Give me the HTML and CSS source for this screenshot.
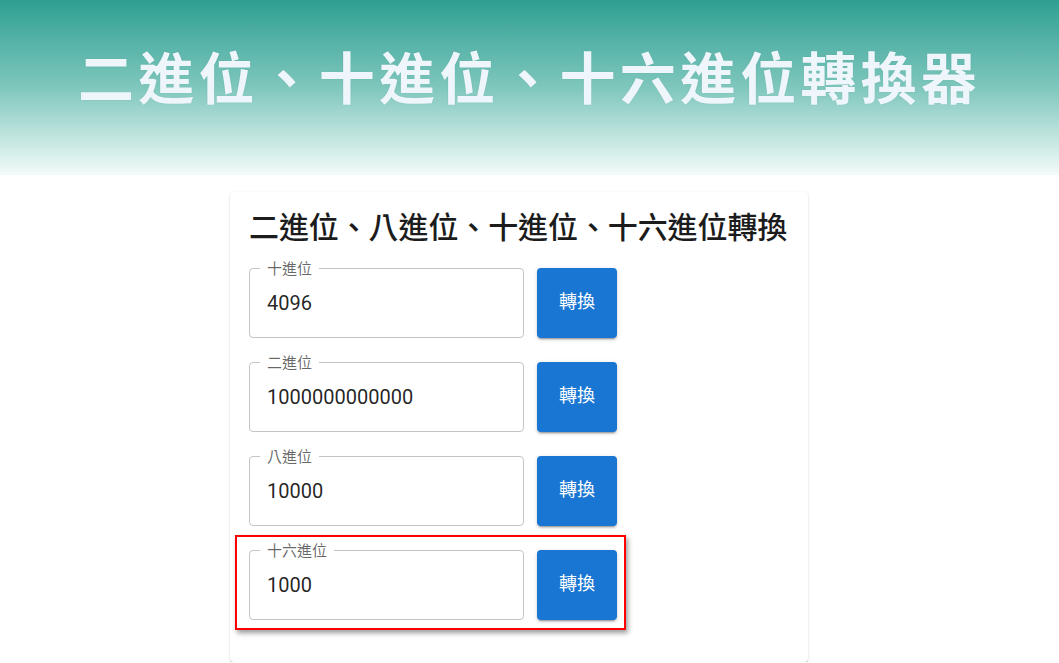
FILE: index.html
```html
<!DOCTYPE html>
<html lang="zh-Hant">
<head>
<meta charset="utf-8">
<title>二進位、十進位、十六進位轉換器</title>
<link rel="stylesheet" href="styles.css">
</head>
<body>
<header class="hero">
  <h1 class="hero-title">二進位、十進位、十六進位轉換器</h1>
</header>
<main class="page">
  <section class="card">
    <h2 class="card-title">二進位、八進位、十進位、十六進位轉換</h2>
    <div class="rows">
      <div class="row">
        <div class="field">
          <span class="field-label">十進位</span>
          <input class="field-input" type="text" value="4096">
        </div>
        <button class="btn" type="button">轉換</button>
      </div>
      <div class="row">
        <div class="field">
          <span class="field-label">二進位</span>
          <input class="field-input" type="text" value="1000000000000">
        </div>
        <button class="btn" type="button">轉換</button>
      </div>
      <div class="row">
        <div class="field">
          <span class="field-label">八進位</span>
          <input class="field-input" type="text" value="10000">
        </div>
        <button class="btn" type="button">轉換</button>
      </div>
      <div class="row row-marked">
        <div class="field">
          <span class="field-label">十六進位</span>
          <input class="field-input" type="text" value="1000">
        </div>
        <button class="btn" type="button">轉換</button>
        <div class="highlight"></div>
      </div>
    </div>
  </section>
</main>
</body>
</html>
```
FILE: styles.css
```css
* {
  box-sizing: border-box;
}

html, body {
  margin: 0;
  padding: 0;
  background: #ffffff;
}

body {
  font-family: Roboto, "Noto Sans CJK TC", "Liberation Sans", sans-serif;
  color: rgba(0, 0, 0, 0.87);
  overflow: hidden;
}

.hero {
  height: 175px;
  display: flex;
  align-items: center;
  justify-content: center;
  background: linear-gradient(180deg, #2f9f93 0%, #7fc7bd 50%, #f3fbf9 100%);
}

.hero-title {
  margin: 0 0 26px 0;
  font-family: "Noto Sans CJK TC", sans-serif;
  font-size: 56px;
  font-weight: 700;
  line-height: 1;
  letter-spacing: 4.2px;
  color: #eef6fc;
  text-shadow: 0 0 1px rgba(40, 120, 110, 0.35);
}

.page {
  padding: 17px 0 0 230px;
}

.card {
  width: 578px;
  height: 470px;
  background: #ffffff;
  border-radius: 4px;
  padding: 15px 19px 42px 19px;
  box-shadow: 0 2px 1px -1px rgba(0, 0, 0, 0.2),
              0 1px 1px 0 rgba(0, 0, 0, 0.14),
              0 1px 3px 0 rgba(0, 0, 0, 0.12);
}

.card-title {
  margin: 0 0 25px 0;
  font-family: "Noto Sans CJK TC", sans-serif;
  font-size: 30px;
  font-weight: 500;
  line-height: 36px;
  letter-spacing: -0.1px;
  color: #1c1c1c;
}

.rows {
  display: flex;
  flex-direction: column;
  align-items: flex-start;
  gap: 24px;
}

.row {
  position: relative;
  display: flex;
  align-items: stretch;
  gap: 13px;
  height: 70px;
}

.field {
  position: relative;
  width: 275px;
  border: 1px solid #c4c4c4;
  border-radius: 4px;
}

.field-label {
  position: absolute;
  top: -11px;
  left: 10px;
  padding: 0 7px;
  background: #ffffff;
  font-family: "Noto Sans CJK TC", sans-serif;
  font-size: 15px;
  line-height: 20px;
  color: rgba(0, 0, 0, 0.6);
}

.field-input {
  width: 100%;
  height: 100%;
  border: 0;
  outline: none;
  background: transparent;
  padding: 0 17px;
  font-family: Roboto, "Liberation Sans", sans-serif;
  font-size: 20px;
  color: rgba(0, 0, 0, 0.87);
}

.btn {
  width: 80px;
  border: 0;
  border-radius: 4px;
  background: #1976d2;
  color: #ffffff;
  font-family: "Noto Sans CJK TC", sans-serif;
  font-size: 18px;
  font-weight: 400;
  line-height: 1;
  padding: 0 0 6px 0;
  box-shadow: 0 3px 1px -2px rgba(0, 0, 0, 0.2),
              0 2px 2px 0 rgba(0, 0, 0, 0.14),
              0 1px 5px 0 rgba(0, 0, 0, 0.12);
  cursor: pointer;
}

.highlight {
  position: absolute;
  top: -15px;
  left: -14px;
  right: -9px;
  bottom: -10px;
  border: 2px solid #ff0000;
  box-shadow: 2px 3px 5px rgba(0, 0, 0, 0.4);
  pointer-events: none;
}
```
